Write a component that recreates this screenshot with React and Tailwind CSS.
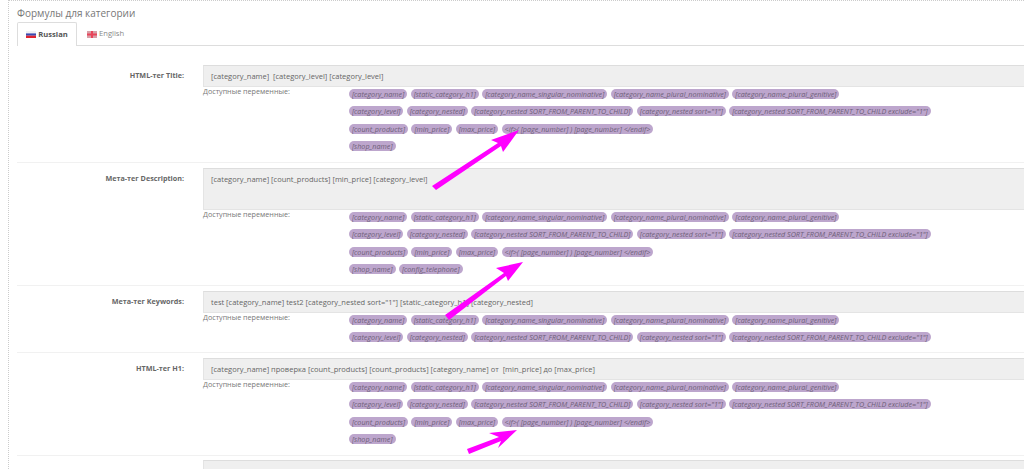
const basicTags = [
  ['[category_name]', '[static_category_h1]', '[category_name_singular_nominative]', '[category_name_plural_nominative]', '[category_name_plural_genitive]'],
  ['[category_level]', '[category_nested]', '[category_nested SORT_FROM_PARENT_TO_CHILD]', '[category_nested sort="1"]', '[category_nested SORT_FROM_PARENT_TO_CHILD exclude="1"]'],
];
const priceTags = ['[count_products]', '[min_price]', '[max_price]', '<if>( [page_number] ) [page_number] </endif>'];

const rows = [
  {
    label: 'HTML-тег Title:',
    value: '[category_name]  [category_level] [category_level]',
    tags: [...basicTags, priceTags, ['[shop_name]']],
    box: 'h-[22px]',
    pad: 'h-[75px]',
  },
  {
    label: 'Мета-тег Description:',
    value: '[category_name] [count_products] [min_price] [category_level]',
    tags: [...basicTags, priceTags, ['[shop_name]', '[config_telephone]']],
    box: 'h-[42px]',
    pad: 'h-[75px]',
  },
  {
    label: 'Мета-тег Keywords:',
    value: 'test [category_name] test2 [category_nested sort="1"] [static_category_h1] [category_nested]',
    tags: basicTags,
    box: 'h-[22px]',
    pad: 'h-[39px]',
  },
  {
    label: 'HTML-тег H1:',
    value: '[category_name] проверка [count_products] [count_products] [category_name] от  [min_price] до [max_price]',
    tags: [...basicTags, priceTags, ['[shop_name]']],
    box: 'h-[22px]',
    pad: 'h-[75px]',
  },
];

function Tag({ children }) {
  return (
    <span className="h-[10px] px-[3px] rounded-[5px] bg-[#bda6cd] text-[#6e5f78] text-[7.2px] leading-[10px] italic whitespace-nowrap">
      {children}
    </span>
  );
}

function FormRow({ row }) {
  return (
    <div className="flex border-b border-[#f1f1f1] pt-[5px]">
      <div className="w-[186px] pr-[19px] pt-[4px] shrink-0 text-right text-[7.2px] leading-[12px] font-bold text-[#666]">
        {row.label}
      </div>
      <div className="flex-1 min-w-0">
        <div className={`${row.box} bg-[#efefef] border-t border-[#ddd] border-l border-b border-l-[#e4e4e4] border-b-[#e4e4e4] pl-[7px] pt-[4px] text-[7.5px] leading-[12px] text-[#666] whitespace-pre`}>
          {row.value}
        </div>
        <div className="flex">
          <div className="w-[146px] shrink-0 text-[7.2px] leading-[9px] text-[#777]">Доступные переменные:</div>
          <div className={`${row.pad} flex flex-col gap-[7.4px] pt-[2px]`}>
            {row.tags.map((line, i) => (
              <div key={i} className="flex gap-[3.4px]">
                {line.map((t) => <Tag key={t}>{t}</Tag>)}
              </div>
            ))}
          </div>
        </div>
      </div>
    </div>
  );
}

export default function App() {
  return (
    <div className="relative h-[469px] w-[1024px] overflow-hidden bg-white font-['Open_Sans',sans-serif]">
      <div className="ml-[8px] h-full border-l border-t border-dotted border-[#ccc] pl-[8px]">
        <div className="pt-[6px] text-[10px] leading-[12px] text-[#777]">Формулы для категории</div>
        <div className="mt-[3px] flex h-[24px] border-b border-[#ddd]">
          <div className="flex h-[24px] w-[60px] items-center justify-center gap-[2px] rounded-t-[2px] border border-b-0 border-[#ddd] bg-white text-[7.6px] font-bold text-[#555]">
            <svg width="10" height="7" viewBox="0 0 10 7">
              <rect width="10" height="2.4" fill="#f0f0f4" />
              <rect y="2.4" width="10" height="2.3" fill="#3a49b0" />
              <rect y="4.7" width="10" height="2.3" fill="#e0242f" />
            </svg>
            Russian
          </div>
          <div className="flex h-[24px] items-center gap-[2px] pl-[10px] text-[7.6px] text-[#888]">
            <svg width="10" height="7" viewBox="0 0 10 7">
              <rect width="10" height="7" fill="#d8a0a8" />
              <path d="M4 0h2v7H4zM0 2.5h10v2H0z" fill="#e8455a" />
            </svg>
            English
          </div>
        </div>
        <div className="h-[14px]" />
        <FormRow row={rows[0]} />
        <FormRow row={rows[1]} />
        <FormRow row={rows[2]} />
        <FormRow row={rows[3]} />
        <div className="flex pt-[4px]">
          <div className="w-[186px] shrink-0" />
          <div className="h-[22px] flex-1 bg-[#efefef] border-t border-[#ddd] border-l border-l-[#e4e4e4]" />
        </div>
      </div>
      <svg className="absolute left-0 top-0 pointer-events-none" width="1024" height="469">
        <path d="M432 186 L498 143 L491 140 L519 130 L503 152 L501 146 L436 190 Z" fill="#ff00ff" />
        <path d="M445 315 L504 273 L496 268 L523 262 L508 281 L506 276 L449 320 Z" fill="#ff00ff" />
        <path d="M467 449 L499 437 L489 433 L517 430 L498 448 L501 441 L469 454 Z" fill="#ff00ff" />
      </svg>
    </div>
  );
}
